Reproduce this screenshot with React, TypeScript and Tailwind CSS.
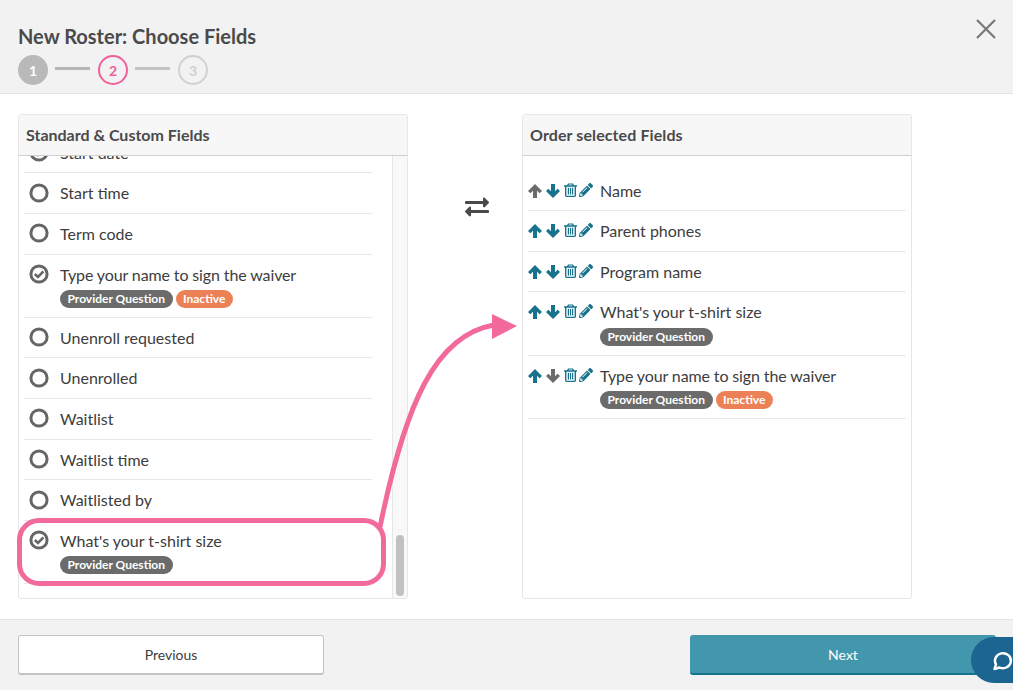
import { FaPencilAlt, FaExchangeAlt } from "react-icons/fa";

type Campo = { nombre: string; marcado?: boolean; pregunta?: boolean; inactivo?: boolean };

const campos: Campo[] = [
  { nombre: "Start date", marcado: true },
  { nombre: "Start time" },
  { nombre: "Term code" },
  { nombre: "Type your name to sign the waiver", marcado: true, pregunta: true, inactivo: true },
  { nombre: "Unenroll requested" },
  { nombre: "Unenrolled" },
  { nombre: "Waitlist" },
  { nombre: "Waitlist time" },
  { nombre: "Waitlisted by" },
  { nombre: "What's your t-shirt size", marcado: true, pregunta: true },
];

const ordenados: (Campo & { subirOff?: boolean; bajarOff?: boolean; alto: string })[] = [
  { nombre: "Name", subirOff: true, alto: "h-[40.4px]" },
  { nombre: "Parent phones", alto: "h-[40.4px]" },
  { nombre: "Program name", alto: "h-[40.4px]" },
  { nombre: "What's your t-shirt size", pregunta: true, alto: "h-[63.5px]" },
  { nombre: "Type your name to sign the waiver", pregunta: true, inactivo: true, bajarOff: true, alto: "h-[63px]" },
];

const Badges = ({ campo }: { campo: Campo }) => (
  <div className="flex gap-[3px] mt-[5.4px]">
    {campo.pregunta && (
      <span className="h-[18px] leading-[18px] px-[7.5px] rounded-[9px] bg-[#6b6b6b] text-white text-[12px] font-bold">
        Provider Question
      </span>
    )}
    {campo.inactivo && (
      <span className="h-[18px] leading-[18px] px-[7.5px] rounded-[9px] bg-[#ec8157] text-white text-[12px] font-bold">
        Inactive
      </span>
    )}
  </div>
);

const Radio = ({ marcado }: { marcado?: boolean }) => (
  <svg width="20" height="20" viewBox="0 0 20 20" className="shrink-0 mt-[-0.5px] ml-[-0.5px]">
    <circle cx="10" cy="10" r="8.1" fill="none" stroke="#666" strokeWidth="3" />
    {marcado && <path d="M5.8 10 L9 13 L14.4 7.4" fill="none" stroke="#666" strokeWidth="2.6" />}
  </svg>
);

const Nombre = ({ texto }: { texto: string }) => (
  <div className={texto.startsWith("Type") ? "tracking-[-0.12px]" : ""}>{texto}</div>
);

const Flecha = ({ abajo, apagada }: { abajo?: boolean; apagada?: boolean }) => (
  <svg width="14" height="14" viewBox="0 0 14 14" className={`${abajo ? "rotate-180" : ""} ${apagada ? "text-[#6b6b6b]" : "text-[#17738c]"}`}>
    <path d="M7 0 L14 7 L11.6 9.2 L9 6.8 V14 H5 V6.8 L2.4 9.2 L0 7 Z" fill="currentColor" />
  </svg>
);

const Papelera = () => (
  <svg width="13" height="14" viewBox="0 0 13 15" preserveAspectRatio="none" className="text-[#17738c]">
    <path
      d="M4 0.5 H9 L10 2.5 H13 V4 H12 V13.5 Q12 15 10.5 15 H2.5 Q1 15 1 13.5 V4 H0 V2.5 H3 Z M5 1.7 L4.6 2.5 H8.4 L8 1.7 Z M2.4 4 V13.6 H10.6 V4 Z M3.8 5.2 H5 V12.4 H3.8 Z M5.9 5.2 H7.1 V12.4 H5.9 Z M8 5.2 H9.2 V12.4 H8 Z"
      fill="currentColor"
      fillRule="evenodd"
    />
  </svg>
);

const Paso = ({ n, clase }: { n: number; clase: string }) => (
  <div className={`w-[30px] h-[30px] rounded-full flex items-center justify-center text-[14px] font-bold ${clase}`}>
    {n}
  </div>
);

export default function App() {
  return (
    <div className="relative h-[690px] w-[1013px] overflow-hidden flex flex-col bg-white text-[#3d3d3d] font-['Lato',sans-serif]">
      {/* Cabecera */}
      <div className="relative h-[94px] shrink-0 bg-[#f2f2f2] border-b border-[#e2e2e2] px-[18px] pt-[23px]">
        <h1 className="text-[20px] leading-[26px] font-bold text-[#4a4a4a]">New Roster: Choose Fields</h1>
        <div className="flex items-start mt-[6px]">
          <Paso n={1} clase="bg-[#b9b9b9] text-white" />
          <div className="w-[35px] h-[3px] mt-[12px] ml-[7px] mr-[8px] bg-[#b5b5b5]" />
          <Paso n={2} clase="border-2 border-[#f0609a] text-[#f0609a]" />
          <div className="w-[35px] h-[3px] mt-[12px] ml-[7px] mr-[8px] bg-[#c4c4c4]" />
          <Paso n={3} clase="border-2 border-[#d0d0d0] text-[#cfcfcf]" />
        </div>
        <svg width="22" height="22" viewBox="0 0 22 22" className="absolute top-[18px] right-[16px]">
          <path d="M2 2 L20 20 M20 2 L2 20" stroke="#787878" strokeWidth="2.2" />
        </svg>
      </div>

      {/* Contenido */}
      <div className="flex-1 flex items-start px-[18px] pt-[20px]">
        <div className="w-[390px] h-[485px] border border-[#e6e6e6] rounded-[3px] flex flex-col overflow-hidden">
          <div className="h-[41px] shrink-0 bg-[#f7f7f7] border-b border-[#cfcfcf] px-[7px] flex items-center text-[16px] font-bold text-[#4a4a4a]">
            Standard &amp; Custom Fields
          </div>
          <div className="flex-1 flex min-h-0">
            <div className="flex-1 overflow-hidden pl-[5px] pr-[20px]">
              <div className="mt-[-23.35px]">
                {campos.map((c) => (
                  <div
                    key={c.nombre}
                    className={`flex gap-[11.5px] pl-[5px] pt-[10px] border-b border-[#e8e8e8] text-[16px] leading-[20px] ${c.pregunta ? "h-[63px]" : "h-[40.67px]"}`}
                  >
                    <Radio marcado={c.marcado} />
                    <div>
                      <Nombre texto={c.nombre} />
                      <Badges campo={c} />
                    </div>
                  </div>
                ))}
              </div>
            </div>
            <div className="w-[15px] shrink-0 bg-[#f8f8f8] border-l border-[#e6e6e6] relative">
              <div className="absolute left-[3px] w-[8px] top-[379px] h-[61px] rounded-[4px] bg-[#c1c1c1]" />
            </div>
          </div>
        </div>

        <div className="w-[114px] flex pl-[57px] pt-[81px]">
          <FaExchangeAlt className="text-[#4a4a4a] text-[24px]" />
        </div>

        <div className="w-[390px] h-[485px] border border-[#e6e6e6] rounded-[3px] flex flex-col overflow-hidden">
          <div className="h-[41px] shrink-0 bg-[#f7f7f7] border-b border-[#cfcfcf] px-[7px] flex items-center text-[16px] font-bold text-[#4a4a4a] tracking-[0.1px]">
            Order selected Fields
          </div>
          <div className="px-[5px] pt-[15px]">
            {ordenados.map((c) => (
              <div
                key={c.nombre}
                className={`flex pt-[10px] border-b border-[#e8e8e8] text-[16px] leading-[20px] ${c.alto}`}
              >
                <div className="flex items-start w-[72px] shrink-0 pt-[3px]">
                  <Flecha apagada={c.subirOff} />
                  <div className="ml-[4px]"><Flecha abajo apagada={c.bajarOff} /></div>
                  <div className="ml-[4px] mt-[-1px]"><Papelera /></div>
                  <FaPencilAlt className="ml-[2px] mt-[-1px] text-[14px] text-[#17738c]" />
                </div>
                <div>
                  <Nombre texto={c.nombre} />
                  <Badges campo={c} />
                </div>
              </div>
            ))}
          </div>
        </div>
      </div>

      {/* Pie */}
      <div className="h-[71px] shrink-0 bg-[#f2f2f2] border-t border-[#e2e2e2] px-[18px] pt-[15px] flex justify-between">
        <button className="w-[306px] h-[40px] bg-white border border-[#c4c4c4] border-b-2 rounded-[3px] text-[14px] text-[#3d3d3d]">
          Previous
        </button>
        <button className="w-[306px] h-[40px] bg-[#4397ad] border-b-2 border-[#17738c] rounded-[3px] text-[14px] text-white mr-[-1px]">
          Next
        </button>
      </div>

      {/* Burbuja de chat */}
      <div className="absolute left-[971px] top-[637px] w-[70px] h-[46px] rounded-[23px] bg-[#1c6591] pl-[21px] pt-[12px]">
        <svg width="22" height="22" viewBox="0 0 22 22">
          <path d="M2.5 20 L4 15.5 A8 7.5 0 1 1 7.5 18.5 Z" fill="none" stroke="white" strokeWidth="2.4" strokeLinejoin="round" />
        </svg>
      </div>

      {/* Anotación */}
      <div className="absolute left-[17px] top-[518px] w-[369px] h-[68px] rounded-[22px] border-[5px] border-[#f26a9b]" />
      <svg className="absolute left-0 top-0 pointer-events-none" width="1013" height="690" viewBox="0 0 1013 690">
        <path d="M380 527 C 405 405, 435 335, 494 325" fill="none" stroke="#f26a9b" strokeWidth="5" />
        <polygon points="492,314 517,326 492,339" fill="#f26a9b" />
      </svg>
    </div>
  );
}
